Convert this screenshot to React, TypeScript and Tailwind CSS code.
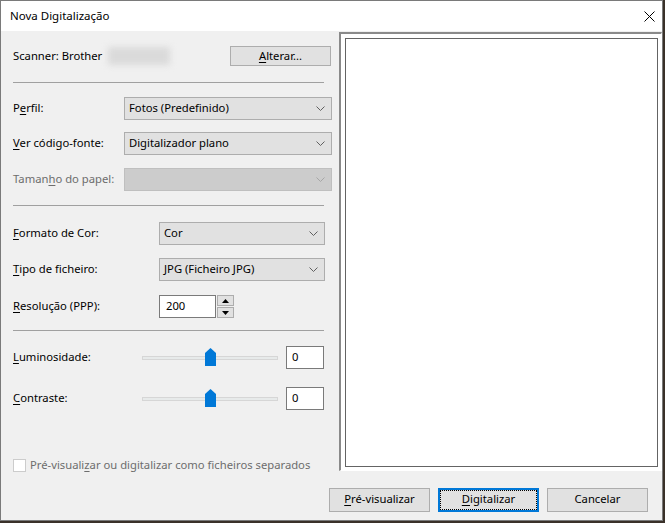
import React from "react";

const font = { fontFamily: '"Noto Sans", "Open Sans", sans-serif' };

function U({ children }: { children: React.ReactNode }) {
  return <span className="underline underline-offset-2">{children}</span>;
}

function Chevron({ disabled }: { disabled?: boolean }) {
  return (
    <svg width="9" height="5" viewBox="0 0 9 5" className="shrink-0">
      <path d="M0.5 0.5 L4.5 4.5 L8.5 0.5" fill="none" stroke={disabled ? "#a6a6a6" : "#606060"} strokeWidth="1" />
    </svg>
  );
}

function Select({ value, width, disabled }: { value?: string; width: string; disabled?: boolean }) {
  return (
    <div
      className={`${width} h-[23px] flex items-center justify-between pl-[4px] pr-[6px] border ${
        disabled ? "bg-[#cccccc] border-[#bfbfbf]" : "bg-[#e1e1e1] border-[#adadad]"
      } text-black`}
    >
      <span>{value}</span>
      <Chevron disabled={disabled} />
    </div>
  );
}

function Separator() {
  return <div className="w-[311px] h-px bg-[#a0a0a0]" />;
}

function Slider() {
  return (
    <div className="relative w-[136px] h-[20px] flex items-center">
      <div className="w-full h-[4px] bg-[#e7eaea] border border-[#d6d6d6]" />
      <svg width="11" height="18" viewBox="0 0 11 18" className="absolute left-[63px] top-[0px]">
        <path d="M0 5 L5.5 0 L11 5 L11 18 L0 18 Z" fill="#0078d7" />
      </svg>
    </div>
  );
}

function NumBox({ value }: { value: string }) {
  return (
    <div className="w-[38px] h-[23px] bg-white border border-[#7a7a7a] flex items-center pl-[5px]">
      {value}
    </div>
  );
}

function Button({ children, focused }: { children: React.ReactNode; focused?: boolean }) {
  return (
    <div
      className={`w-[101px] h-[24px] flex items-center justify-center ${
        focused ? "border-2 border-[#0078d7] bg-[#e1e1e1]" : "border border-[#adadad] bg-[#e1e1e1]"
      }`}
    >
      {focused ? (
        <div className="w-full h-full border border-dotted border-black flex items-center justify-center">
          {children}
        </div>
      ) : (
        children
      )}
    </div>
  );
}

export default function App() {
  return (
    <div className="w-[665px] h-[523px] bg-[#3a3129] text-black text-[11.25px]" style={font}>
      <div className="w-[663px] h-[521px] border border-[#7a7a7a] bg-[#f0f0f0] flex flex-col">
        {/* title bar */}
        <div className="h-[30px] bg-white flex items-center justify-between pl-[9px] pr-[7px] shrink-0">
          <span className="text-[11.5px]">Nova Digitalização</span>
          <svg width="11" height="11" viewBox="0 0 11 11">
            <path d="M0.5 0.5 L10.5 10.5 M10.5 0.5 L0.5 10.5" stroke="#000" strokeWidth="1" />
          </svg>
        </div>

        <div className="flex flex-1">
          {/* left form */}
          <div className="w-[338px] shrink-0 pl-[12px] flex flex-col">
            <div className="mt-[15px] h-[20px] flex items-center">
              <span>Scanner: Brother</span>
              <div className="ml-[6px] w-[62px] h-[18px] bg-[#dadada] blur-[3px]" />
              <div className="ml-auto mr-[8px] w-[101px] h-[20px] border border-[#adadad] bg-[#e1e1e1] flex items-center justify-center">
                <span>
                  <U>A</U>lterar...
                </span>
              </div>
            </div>

            <div className="mt-[16px]">
              <Separator />
            </div>

            <div className="mt-[14px] flex items-center">
              <span className="w-[111px]">
                P<U>e</U>rfil:
              </span>
              <Select value="Fotos (Predefinido)" width="w-[208px]" />
            </div>
            <div className="mt-[12px] flex items-center">
              <span className="w-[111px]">
                <U>V</U>er código-fonte:
              </span>
              <Select value="Digitalizador plano" width="w-[208px]" />
            </div>
            <div className="mt-[13px] flex items-center">
              <span className="w-[111px] text-[#6d6d6d]">
                Taman<U>h</U>o do papel:
              </span>
              <Select width="w-[208px]" disabled />
            </div>

            <div className="mt-[14px]">
              <Separator />
            </div>

            <div className="mt-[16px] flex items-center">
              <span className="w-[146px]">
                <U>F</U>ormato de Cor:
              </span>
              <Select value="Cor" width="w-[166px]" />
            </div>
            <div className="mt-[13px] flex items-center">
              <span className="w-[146px]">
                <U>T</U>ipo de ficheiro:
              </span>
              <Select value="JPG (Ficheiro JPG)" width="w-[166px]" />
            </div>
            <div className="mt-[14px] flex items-center">
              <span className="w-[146px]">
                <U>R</U>esolução (PPP):
              </span>
              <div className="w-[57px] h-[23px] bg-white border border-[#7a7a7a] flex items-center pl-[6px]">200</div>
              <div className="ml-[1px] w-[17px] h-[23px] flex flex-col gap-px">
                <div className="h-[11px] bg-[#e1e1e1] border border-[#adadad] flex items-center justify-center">
                  <svg width="7" height="4" viewBox="0 0 7 4">
                    <path d="M0 4 L3.5 0 L7 4 Z" fill="#000" />
                  </svg>
                </div>
                <div className="h-[11px] bg-[#e1e1e1] border border-[#adadad] flex items-center justify-center">
                  <svg width="7" height="4" viewBox="0 0 7 4">
                    <path d="M0 0 L3.5 4 L7 0 Z" fill="#000" />
                  </svg>
                </div>
              </div>
            </div>

            <div className="mt-[12px]">
              <Separator />
            </div>

            <div className="mt-[15px] flex items-center">
              <span className="w-[129px]">
                <U>L</U>uminosidade:
              </span>
              <Slider />
              <div className="ml-[8px]">
                <NumBox value="0" />
              </div>
            </div>
            <div className="mt-[18px] flex items-center">
              <span className="w-[129px]">
                <U>C</U>ontraste:
              </span>
              <Slider />
              <div className="ml-[8px]">
                <NumBox value="0" />
              </div>
            </div>

            <div className="mt-[47px] flex items-center gap-[4px] text-[#6d6d6d]">
              <div className="w-[13px] h-[13px] bg-white border border-[#cccccc]" />
              <span>
                Pré-visuali<U>z</U>ar ou digitalizar como ficheiros separados
              </span>
            </div>
          </div>

          {/* preview */}
          <div className="mt-px w-[323px] h-[439px] border-t-2 border-l-2 border-t-[#8a8a8a] border-l-[#8a8a8a] border-r border-b border-r-white border-b-white bg-white p-[4px] pr-[3px] pb-[3px]">
            <div className="w-full h-full border border-[#646464] bg-white" />
          </div>
        </div>

        {/* buttons */}
        <div className="h-[50px] shrink-0 flex items-start justify-end gap-[8px] pr-[14px] pt-[14px]">
          <Button>
            <span>
              <U>P</U>ré-visualizar
            </span>
          </Button>
          <Button focused>
            <span>
              <U>D</U>igitalizar
            </span>
          </Button>
          <Button>Cancelar</Button>
        </div>
      </div>
    </div>
  );
}
